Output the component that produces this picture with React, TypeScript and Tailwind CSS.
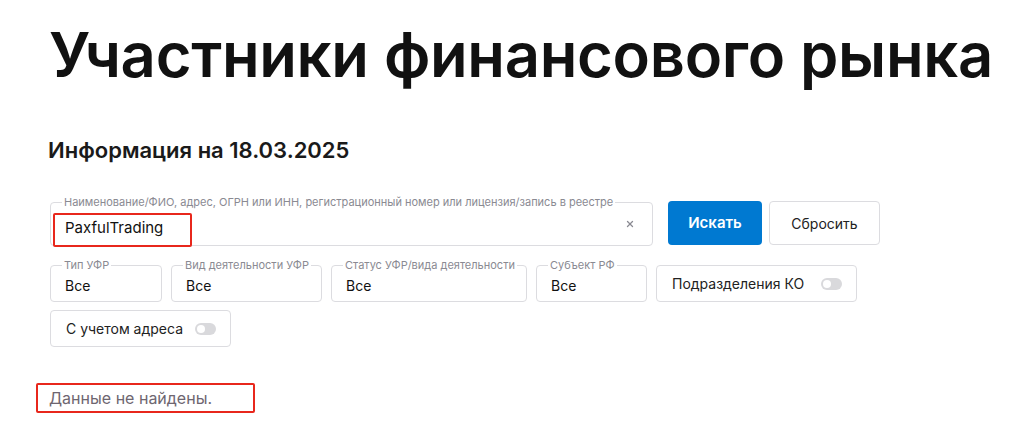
import { X } from 'lucide-react';

type SelectField = { label: string; value: string; width: string };

const filters: SelectField[] = [
  { label: 'Тип УФР', value: 'Все', width: 'w-[112px]' },
  { label: 'Вид деятельности УФР', value: 'Все', width: 'w-[151px]' },
  { label: 'Статус УФР/вида деятельности', value: 'Все', width: 'w-[196px]' },
  { label: 'Субъект РФ', value: 'Все', width: 'w-[111px]' },
];

function Toggle() {
  return (
    <span className="w-[21px] h-[12px] rounded-full bg-[#d9d9dc] flex items-center px-[2px]">
      <span className="w-[8px] h-[8px] rounded-full bg-white" />
    </span>
  );
}

// floating label sitting on the top border of an outlined field
function FieldLabel({ children, className = '' }: { children: React.ReactNode; className?: string }) {
  return (
    <span className={`absolute -top-[7px] bg-white px-[2px] text-[11px] leading-[13px] text-[#8a8a92] whitespace-nowrap ${className}`}>
      {children}
    </span>
  );
}

function OutlinedSelect({ label, value, width }: SelectField) {
  return (
    <div className={`relative ${width} h-[37px] border border-[#dcdce0] rounded-[4px] flex items-center pl-[14px] pt-[3px]`}>
      <FieldLabel className="left-[11px]">{label}</FieldLabel>
      <span className="text-[14px] text-[#111]">{value}</span>
    </div>
  );
}

function ToggleBox({ label, width }: { label: string; width: string }) {
  return (
    <div className={`${width} h-[37px] border border-[#dcdce0] rounded-[4px] flex items-center justify-between pl-[15px] pr-[14px]`}>
      <span className="text-[14px] text-[#222]">{label}</span>
      <Toggle />
    </div>
  );
}

export default function App() {
  return (
    <div className="min-h-screen bg-white" style={{ fontFamily: 'Inter, "Noto Sans", sans-serif' }}>
      <div className="pl-[48px] pt-[20px]">
        <h1 className="text-[61.5px] leading-[70px] font-semibold tracking-[-0.3px] text-[#111] pl-[1px]">
          Участники финансового рынка
        </h1>

        <h2 className="mt-[46px] text-[22px] leading-[28px] font-semibold text-[#1a1a1a]">
          Информация на 18.03.2025
        </h2>

        <div className="mt-[37px] flex items-start pl-[2px]">
          <div className="relative w-[603px] h-[44px] mt-[1px] border border-[#dcdce0] rounded-[4px] flex items-center justify-between">
            <FieldLabel className="left-[11px]">
              Наименование/ФИО, адрес, ОГРН или ИНН, регистрационный номер или лицензия/запись в реестре
            </FieldLabel>
            <div className="self-end -mb-[2px] ml-[2px] border-2 border-[#e8271c] rounded-[2px] w-[139px] h-[34px] flex items-center pl-[10px] pb-[4px] text-[15px] text-[#111]">
              PaxfulTrading
            </div>
            <X className="w-[10px] h-[10px] text-[#8a8a92] mr-[17px]" strokeWidth={3} />
          </div>
          <button className="ml-[15px] w-[94px] h-[44px] rounded-[4px] bg-[#0079d1] text-white text-[15px] font-semibold">
            Искать
          </button>
          <button className="ml-[7px] w-[111px] h-[44px] rounded-[4px] border border-[#dcdce0] bg-white text-[14px] text-[#222]">
            Сбросить
          </button>
        </div>

        <div className="mt-[19px] pl-[2px] flex gap-[9px]">
          {filters.map(f => (
            <OutlinedSelect key={f.label} {...f} />
          ))}
          <ToggleBox label="Подразделения КО" width="w-[201px]" />
        </div>
        <div className="pl-[2px] mt-[8px]">
          <ToggleBox label="С учетом адреса" width="w-[181px]" />
        </div>

        <div className="mt-[36px] -ml-[12px] w-[219px] h-[30px] border-2 border-[#e8271c] rounded-[2px] flex items-center pl-[11px]">
          <span className="text-[16px] text-[#6e6670]">Данные не найдены.</span>
        </div>
      </div>
    </div>
  );
}
